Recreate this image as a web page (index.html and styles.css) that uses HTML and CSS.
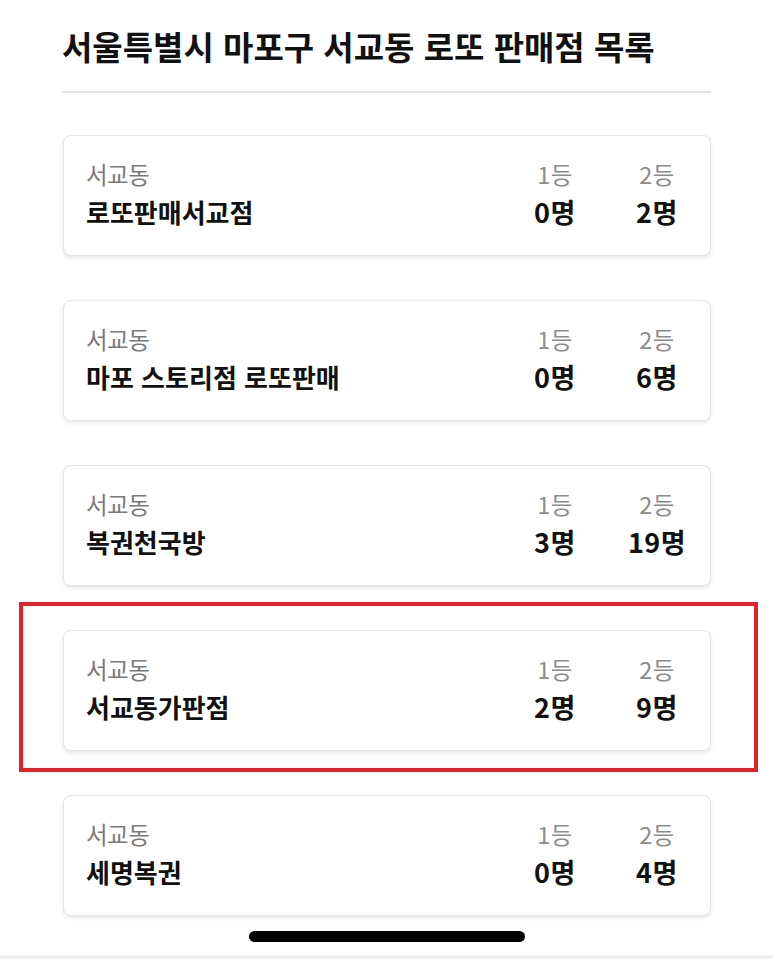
FILE: index.html
```html
<!DOCTYPE html>
<html lang="ko">
<head>
<meta charset="utf-8">
<link rel="stylesheet" href="styles.css">
</head>
<body>
<div class="page">
  <h1 class="title">서울특별시 마포구 서교동 로또 판매점 목록</h1>
  <div class="divider"></div>
  <div class="list">
    <div class="card">
      <div class="info"><div class="area">서교동</div><div class="name">로또판매서교점</div></div>
      <div class="stats">
        <div class="stat"><div class="rank">1등</div><div class="count">0명</div></div>
        <div class="stat"><div class="rank">2등</div><div class="count">2명</div></div>
      </div>
    </div>
    <div class="card">
      <div class="info"><div class="area">서교동</div><div class="name">마포 스토리점 로또판매</div></div>
      <div class="stats">
        <div class="stat"><div class="rank">1등</div><div class="count">0명</div></div>
        <div class="stat"><div class="rank">2등</div><div class="count">6명</div></div>
      </div>
    </div>
    <div class="card">
      <div class="info"><div class="area">서교동</div><div class="name">복권천국방</div></div>
      <div class="stats">
        <div class="stat"><div class="rank">1등</div><div class="count">3명</div></div>
        <div class="stat"><div class="rank">2등</div><div class="count">19명</div></div>
      </div>
    </div>
    <div class="card highlight">
      <div class="info"><div class="area">서교동</div><div class="name">서교동가판점</div></div>
      <div class="stats">
        <div class="stat"><div class="rank">1등</div><div class="count">2명</div></div>
        <div class="stat"><div class="rank">2등</div><div class="count">9명</div></div>
      </div>
    </div>
    <div class="card">
      <div class="info"><div class="area">서교동</div><div class="name">세명복권</div></div>
      <div class="stats">
        <div class="stat"><div class="rank">1등</div><div class="count">0명</div></div>
        <div class="stat"><div class="rank">2등</div><div class="count">4명</div></div>
      </div>
    </div>
  </div>
  <div class="home-indicator"></div>
</div>
<div class="bottom-strip"></div>
</body>
</html>
```
FILE: styles.css
```css
html, body {
  margin: 0;
  padding: 0;
  background: #ffffff;
}
body {
  font-family: "Noto Sans CJK KR", "Noto Sans", sans-serif;
  color: #111111;
  width: 773px;
  height: 959px;
  overflow: hidden;
  position: relative;
}
.page {
  padding: 26px 62px 0 62px;
}
.title {
  margin: 0;
  font-size: 33px;
  line-height: 40px;
  font-weight: 700;
  letter-spacing: 0;
  color: #111;
}
.divider {
  height: 2px;
  background: #e2e2e2;
  margin-top: 25px;
  width: 649px;
}
.list {
  display: flex;
  flex-direction: column;
  gap: 44px;
  margin-top: 42px;
}
.card {
  position: relative;
  box-sizing: border-box;
  width: 648px;
  height: 121px;
  margin-left: 1px;
  border: 1px solid #e4e4e4;
  border-radius: 8px;
  box-shadow: 0 2px 4px rgba(0,0,0,0.10);
  padding: 23px 23px 0 22px;
  display: flex;
  justify-content: space-between;
  background: #fff;
}
.highlight::after {
  content: "";
  position: absolute;
  top: -29px;
  left: -45px;
  right: -48px;
  bottom: -22px;
  border: 4px solid #e0222b;
  pointer-events: none;
}
.area, .rank {
  font-size: 23.5px;
  line-height: 30px;
  color: #7a7a7a;
  font-weight: 400;
  letter-spacing: -0.5px;
}
.rank {
  color: #8c8c8c;
  letter-spacing: 0.5px;
}
.name, .count {
  margin-top: 6px;
  font-size: 26px;
  line-height: 34px;
  font-weight: 700;
  color: #111;
  letter-spacing: 0;
}
.count {
  font-size: 27px;
  letter-spacing: 0.5px;
}
.stats {
  display: flex;
  gap: 42px;
}
.stat {
  width: 60px;
  display: flex;
  flex-direction: column;
  align-items: center;
}
.home-indicator {
  width: 276px;
  height: 11px;
  border-radius: 6px;
  background: #000;
  margin: 15px 0 0 187px;
}
.bottom-strip {
  position: absolute;
  left: 0;
  right: 0;
  bottom: 0;
  height: 4px;
  background: #f0f0f0;
}
```
